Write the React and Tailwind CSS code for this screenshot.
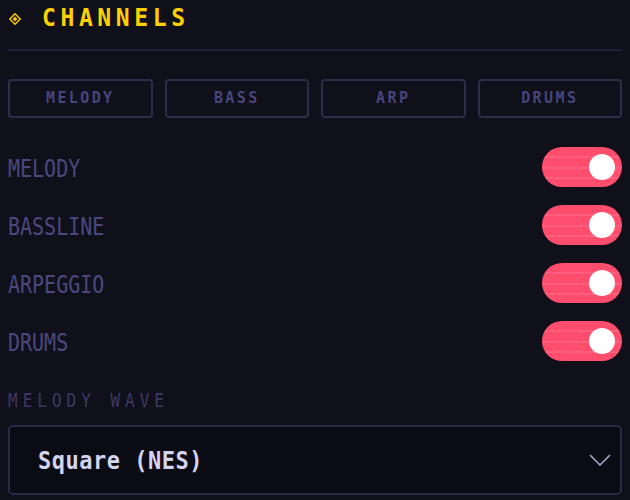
import React, { useState } from 'react';

const pixel = { fontFamily: '"DejaVu Sans Mono", "Liberation Mono", monospace' };

const presets = ['MELODY', 'BASS', 'ARP', 'DRUMS'];

function Toggle({ on, onChange }) {
    return (
        <button
            onClick={onChange}
            className={`relative w-[80px] h-[40px] rounded-full flex items-center px-[7px] overflow-hidden ${on ? 'bg-[#ff4d6d] justify-end' : 'bg-[#2a2740] justify-start'}`}
        >
            {/* scanlines */}
            <span className="absolute left-0 right-0 top-[9px] h-[2px] bg-white/10" />
            <span className="absolute left-0 right-0 top-[20px] h-[2px] bg-white/10" />
            <span className="absolute left-0 right-0 top-[30px] h-[2px] bg-white/10" />
            <span className="relative w-[26px] h-[26px] rounded-full bg-white" />
        </button>
    );
}

export default function App() {
    const [channels, setChannels] = useState({ MELODY: true, BASSLINE: true, ARPEGGIO: true, DRUMS: true });

    return (
        <div className="w-[630px] h-[500px] bg-[#10101a] px-2 overflow-hidden" style={pixel}>
            {/* cabecera */}
            <div className="flex items-center h-[49px] pb-[12px]">
                <svg width="12" height="12" viewBox="0 0 12 12" className="ml-[1px]">
                    <path d="M6 0.8 L11.2 6 L6 11.2 L0.8 6 Z" fill="none" stroke="#f5c400" strokeWidth="1.6" />
                    <path d="M6 3.6 L8.4 6 L6 8.4 L3.6 6 Z" fill="#f5c400" />
                </svg>
                <h1 className="ml-[21px] text-[23px] font-bold tracking-[4.6px] text-[#ffd000] leading-none scale-y-[1.05]">CHANNELS</h1>
            </div>
            <div className="h-[2px] bg-[#221f36]" />

            <div className="grid grid-cols-4 gap-3 mt-[28px]">
                {presets.map(p => (
                    <button key={p} className="h-[39px] rounded-[4px] border-2 border-[#2f2b4a] text-[#48447c] text-[15px] font-bold tracking-[2.4px] leading-none">
                        {p}
                    </button>
                ))}
            </div>

            <div className="flex flex-col gap-[18px] mt-[29px]">
                {Object.keys(channels).map(name => (
                    <div key={name} className="flex justify-between items-center h-[40px]">
                        <span className="inline-block text-[20px] text-[#4b4880] scale-y-[1.25] origin-left tracking-[0px] translate-y-[1px]">{name}</span>
                        <Toggle on={channels[name]} onChange={() => setChannels({ ...channels, [name]: !channels[name] })} />
                    </div>
                ))}
            </div>

            <div className="mt-[32px] text-[16px] text-[#3c3966] tracking-[5px] scale-y-[1.25] origin-left leading-none">MELODY WAVE</div>

            <div className="mt-[16px] h-[70px] rounded-[5px] border-2 border-[#2c2947] bg-[#0b0b13] flex items-center justify-between pl-[28px] pr-[9px]">
                <span className="inline-block text-[22px] text-[#d4d4f0] scale-y-[1.15] font-bold tracking-[0.5px]">Square (NES)</span>
                <svg width="22" height="12" viewBox="0 0 22 12">
                    <path d="M1 1 L11 11 L21 1" fill="none" stroke="#a9a8cf" strokeWidth="1.5" />
                </svg>
            </div>
        </div>
    );
}
